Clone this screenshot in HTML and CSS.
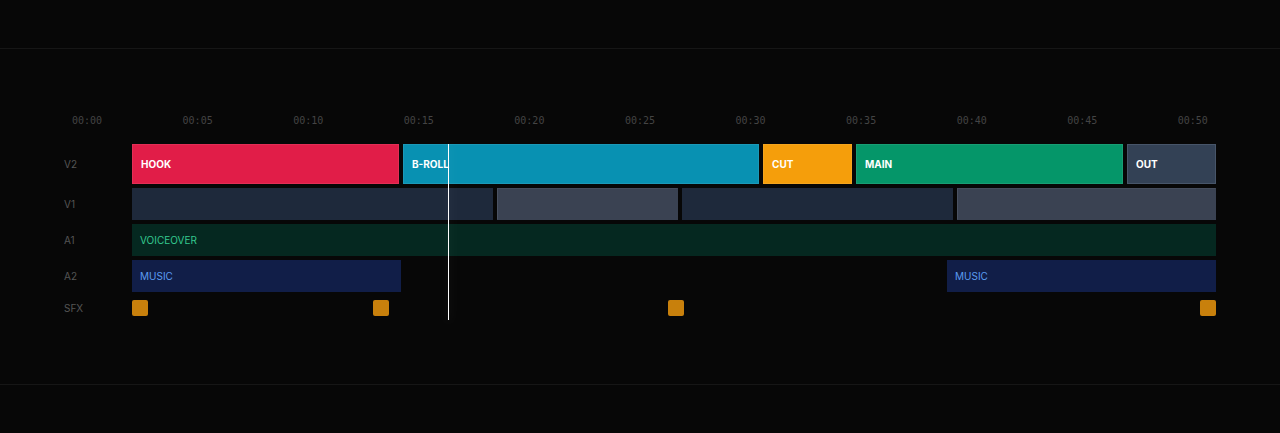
FILE: index.html
```html
<!DOCTYPE html>
<html>
<head>
<meta name="viewport" content="width=device-width, initial-scale=1.0">
<link rel="stylesheet" href="styles.css">
</head>
<body>

<div class="topbar"></div>

<div class="stage">
  <div class="timeline">

    <div class="ruler">
      <span>00:00</span>
      <span>00:05</span>
      <span>00:10</span>
      <span>00:15</span>
      <span>00:20</span>
      <span>00:25</span>
      <span>00:30</span>
      <span>00:35</span>
      <span>00:40</span>
      <span>00:45</span>
      <span>00:50</span>
    </div>

    <div class="tracks">
      <div class="track track-v2">
        <div class="track-label">V2</div>
        <div class="lane">
          <div class="clip clip-hook" style="width:267px">HOOK</div>
          <div class="clip clip-broll" style="width:356px">B-ROLL</div>
          <div class="clip clip-cut" style="width:89px">CUT</div>
          <div class="clip clip-main" style="width:267px">MAIN</div>
          <div class="clip clip-out" style="width:89px">OUT</div>
        </div>
      </div>

      <div class="track track-v1">
        <div class="track-label">V1</div>
        <div class="lane">
          <div class="clip clip-dark" style="width:361px"></div>
          <div class="clip clip-light" style="width:181px"></div>
          <div class="clip clip-dark" style="width:271px"></div>
          <div class="clip clip-light" style="width:259px"></div>
        </div>
      </div>

      <div class="track track-a1">
        <div class="track-label">A1</div>
        <div class="lane">
          <div class="audio audio-voice">VOICEOVER</div>
        </div>
      </div>

      <div class="track track-a2">
        <div class="track-label">A2</div>
        <div class="lane lane-split">
          <div class="audio audio-music">MUSIC</div>
          <div class="audio audio-music">MUSIC</div>
        </div>
      </div>

      <div class="track track-sfx">
        <div class="track-label">SFX</div>
        <div class="lane lane-sfx">
          <div class="sfx" style="left:0px"></div>
          <div class="sfx" style="left:241px"></div>
          <div class="sfx" style="left:536px"></div>
          <div class="sfx" style="left:1068px"></div>
        </div>
      </div>

      <!-- playhead at 00:16 -->
      <div class="playhead" style="left:316px"></div>
    </div>

  </div>
</div>

<div class="bottombar"></div>

</body>
</html>
```

FILE: styles.css
```css
* {
  box-sizing: border-box;
}

body {
  margin: 0;
  height: 433px;
  background-color: #070707;
  font-family: Inter, "Noto Sans", sans-serif;
  overflow: hidden;
}

.topbar {
  height: 49px;
  border-bottom: 1px solid #161616;
}

.bottombar {
  height: 49px;
  border-top: 1px solid #161616;
}

.stage {
  height: 335px;
  display: flex;
  flex-direction: column;
  justify-content: center;
  padding: 0 64px;
}

/* time ruler */
.ruler {
  display: flex;
  justify-content: space-between;
  padding: 0 8px;
  height: 16px;
  line-height: 16px;
  margin-bottom: 15px;
  font-family: "DejaVu Sans Mono", monospace;
  font-size: 10px;
  color: #444;
}

/* tracks */
.tracks {
  position: relative;
  display: flex;
  flex-direction: column;
  gap: 4px;
}

.track {
  display: flex;
  align-items: center;
}

.track-v2 { height: 40px; }
.track-v1,
.track-a1,
.track-a2 { height: 32px; }
.track-sfx { height: 24px; }

.track-label {
  width: 68px;
  flex-shrink: 0;
  font-size: 10px;
  color: #555;
}

.lane {
  flex: 1;
  height: 100%;
  display: flex;
  gap: 4px;
}

.lane-split {
  justify-content: space-between;
}

.lane-sfx {
  position: relative;
}

.clip {
  flex-shrink: 0;
  display: flex;
  align-items: center;
  padding: 0 8px;
  border: 1px solid rgba(255, 255, 255, 0.08);
  font-size: 10px;
  font-weight: 700;
  color: #fff;
  white-space: nowrap;
}

.clip-hook { background-color: #e11d48; }
.clip-broll { background-color: #0891b2; }
.clip-cut { background-color: #f59e0b; }
.clip-main { background-color: #059669; }
.clip-out {
  background-color: #334155;
  border-color: #475569;
}

.clip-dark {
  background-color: #1e293b;
  border-color: #1e293b;
}
.clip-light {
  background-color: #3a4252;
  border-color: #444c5c #3a4252 #3a4252 #4a5262;
}

.audio {
  display: flex;
  align-items: center;
  padding: 0 8px;
  font-size: 10px;
}

.audio-voice {
  flex: 1;
  background-color: #052820;
  color: #34c98f;
}

.audio-music {
  width: 269px;
  background-color: #111e48;
  color: #5b9cf0;
}

/* sound effect markers */
.sfx {
  position: absolute;
  top: 4px;
  width: 16px;
  height: 16px;
  border-radius: 2px;
  background-color: #c8800c;
}

/* playhead */
.playhead {
  position: absolute;
  top: 0;
  bottom: 0;
  margin-left: 68px;
  width: 1px;
  background-color: #fff;
  box-shadow: 0 0 12px 3px rgba(255, 255, 255, 0.04);
}
```
